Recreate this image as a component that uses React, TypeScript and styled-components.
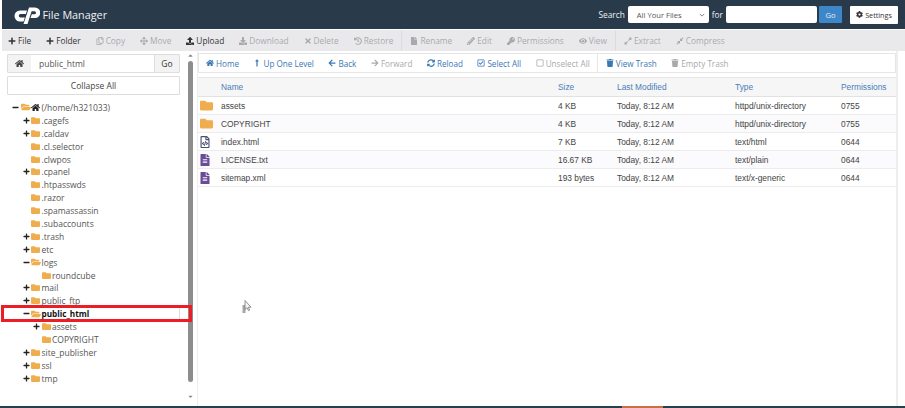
import React from 'react';
import styled, { createGlobalStyle } from 'styled-components';
import {
  FaHome, FaPlus, FaRegCopy, FaArrowsAlt, FaUpload, FaDownload, FaTimes, FaHistory, FaFile,
  FaPencilAlt, FaKey, FaEye, FaExpandAlt, FaCompressAlt, FaLongArrowAltUp, FaArrowLeft, FaArrowRight,
  FaSyncAlt, FaRegCheckSquare, FaRegSquare, FaTrash, FaFolder, FaFolderOpen, FaCog, FaMinus,
  FaRegFileCode, FaFileAlt, FaCaretUp, FaCaretDown,
} from 'react-icons/fa';

const actions = [
  { icon: <FaPlus />, label: 'File', on: true },
  { icon: <FaPlus />, label: 'Folder', on: true },
  { icon: <FaRegCopy />, label: 'Copy' },
  { icon: <FaArrowsAlt />, label: 'Move' },
  { icon: <FaUpload />, label: 'Upload', on: true },
  { icon: <FaDownload />, label: 'Download' },
  { icon: <FaTimes />, label: 'Delete' },
  { icon: <FaHistory />, label: 'Restore', split: true },
  { icon: <FaFile />, label: 'Rename' },
  { icon: <FaPencilAlt />, label: 'Edit' },
  { icon: <FaKey />, label: 'Permissions' },
  { icon: <FaEye />, label: 'View', split: true },
  { icon: <FaExpandAlt />, label: 'Extract' },
  { icon: <FaCompressAlt />, label: 'Compress' },
];

const navItems = [
  { icon: <FaHome />, label: 'Home', on: true },
  { icon: <FaLongArrowAltUp />, label: 'Up One Level', on: true },
  { icon: <FaArrowLeft />, label: 'Back', on: true },
  { icon: <FaArrowRight />, label: 'Forward' },
  { icon: <FaSyncAlt />, label: 'Reload', on: true },
  { icon: <FaRegCheckSquare />, label: 'Select All', on: true },
  { icon: <FaRegSquare />, label: 'Unselect All', split: true },
  { icon: <FaTrash />, label: 'View Trash', on: true },
  { icon: <FaTrash />, label: 'Empty Trash' },
];

const tree = [
  { label: '.cagefs', depth: 1, toggle: '+' },
  { label: '.caldav', depth: 1, toggle: '+' },
  { label: '.cl.selector', depth: 1 },
  { label: '.clwpos', depth: 1 },
  { label: '.cpanel', depth: 1, toggle: '+' },
  { label: '.htpasswds', depth: 1 },
  { label: '.razor', depth: 1 },
  { label: '.spamassassin', depth: 1 },
  { label: '.subaccounts', depth: 1 },
  { label: '.trash', depth: 1, toggle: '+' },
  { label: 'etc', depth: 1, toggle: '+' },
  { label: 'logs', depth: 1, toggle: '-' },
  { label: 'roundcube', depth: 2 },
  { label: 'mail', depth: 1, toggle: '+' },
  { label: 'public_ftp', depth: 1, toggle: '+' },
  { label: 'public_html', depth: 1, toggle: '-', current: true },
  { label: 'assets', depth: 2, toggle: '+' },
  { label: 'COPYRIGHT', depth: 2 },
  { label: 'site_publisher', depth: 1, toggle: '+' },
  { label: 'ssl', depth: 1, toggle: '+' },
  { label: 'tmp', depth: 1, toggle: '+' },
];

const files = [
  { kind: 'folder', name: 'assets', size: '4 KB', type: 'httpd/unix-directory', perm: '0755' },
  { kind: 'folder', name: 'COPYRIGHT', size: '4 KB', type: 'httpd/unix-directory', perm: '0755' },
  { kind: 'code', name: 'index.html', size: '7 KB', type: 'text/html', perm: '0644' },
  { kind: 'text', name: 'LICENSE.txt', size: '16.67 KB', type: 'text/plain', perm: '0644' },
  { kind: 'text', name: 'sitemap.xml', size: '193 bytes', type: 'text/x-generic', perm: '0644' },
];

const App: React.FC = () => {
  return (
    <Page>
      <GlobalStyle />
      <Header>
        <Logo viewBox="0 0 27 17" aria-hidden="true">
          <path d="M14 3.500H7a5.500 5.500 0 0 0 0 11h3.500l1.400-4H7.500a1.700 1.700 0 0 1 0-3.400h5.300z" fill="#fff" />
          <path d="M10.500 17L16 .5h6a5.200 5.200 0 0 1 0 10.500h-4.500l1.300-3.800h2.700a1.500 1.500 0 0 0 0-3h-2.900L14.500 17z" fill="#fff" />
        </Logo>
        <Title>File Manager</Title>
        <SearchGroup>
          <HeaderLabel>Search</HeaderLabel>
          <ScopeSelect>
            All Your Files
            <Chevron viewBox="0 0 8 5"><path d="M1 1l3 3 3-3" /></Chevron>
          </ScopeSelect>
          <HeaderLabel>for</HeaderLabel>
          <SearchInput />
          <GoButton>Go</GoButton>
        </SearchGroup>
        <SettingsButton><FaCog /> Settings</SettingsButton>
      </Header>

      <ActionBar>
        {actions.map((a) => (
          <React.Fragment key={a.label}>
            <ActionItem $on={a.on}>{a.icon}{a.label}</ActionItem>
            {a.split && <ActionDivider />}
          </React.Fragment>
        ))}
      </ActionBar>

      <Body>
        <Sidebar>
          <SideInner>
            <PathForm>
              <PathHome><FaHome /></PathHome>
              <PathValue>public_html</PathValue>
              <PathGo>Go</PathGo>
            </PathForm>
            <CollapseButton>Collapse All</CollapseButton>
            <Tree>
              <TreeRow $depth={0}>
                <Toggle><FaMinus /></Toggle>
                <FolderOpen />
                <HomeGlyph />
                <span>(/home/h321033)</span>
              </TreeRow>
              {tree.map((t) => (
                <TreeRow key={t.label} $depth={t.depth} $current={t.current}>
                  <Toggle>{t.toggle === '+' && <FaPlus />}{t.toggle === '-' && <FaMinus />}</Toggle>
                  {t.toggle === '-' ? <FolderOpen /> : <FolderClosed />}
                  <span>{t.label}</span>
                </TreeRow>
              ))}
            </Tree>
          </SideInner>
          <ScrollBar>
            <FaCaretUp />
            <ScrollThumb />
            <FaCaretDown />
          </ScrollBar>
        </Sidebar>

        <Main>
          <NavBar>
            {navItems.map((n) => (
              <React.Fragment key={n.label}>
                <NavItem $on={n.on}>{n.icon}{n.label}</NavItem>
                {n.split && <NavDivider />}
              </React.Fragment>
            ))}
          </NavBar>
          <Table>
            <HeadRow>
              <span />
              <span>Name</span>
              <span>Size</span>
              <span>Last Modified</span>
              <span>Type</span>
              <span>Permissions</span>
            </HeadRow>
            {files.map((f, i) => (
              <FileRow key={f.name} $odd={i % 2 === 1}>
                <FileIcon $kind={f.kind}>
                  {f.kind === 'folder' && <FaFolder />}
                  {f.kind === 'code' && <FaRegFileCode />}
                  {f.kind === 'text' && <FaFileAlt />}
                </FileIcon>
                <span>{f.name}</span>
                <span>{f.size}</span>
                <span>Today, 8:12 AM</span>
                <span>{f.type}</span>
                <span>{f.perm}</span>
              </FileRow>
            ))}
          </Table>
        </Main>
      </Body>

      <BottomStrip><StripAccent /></BottomStrip>
      <RedMark><RedMarkTick /></RedMark>
      <Cursor viewBox="0 0 10 14" aria-hidden="true">
        <rect x="0.500" y="5" width="3" height="8" fill="#a4a8ad" />
        <path d="M3 .5v9l2-1.800 1.500 3 1.200-.6L6.300 7.200H9z" fill="#f4f4f4" stroke="#777" strokeWidth="0.800" />
      </Cursor>
    </Page>
  );
};

export default App;

const GlobalStyle = createGlobalStyle`
  html, body {
    margin: 0;
    padding: 0;
    background: #fff;
    overflow: hidden;
  }
  * {
    box-sizing: border-box;
  }
`;

const Page = styled.div`
  position: relative;
  width: 905px;
  height: 408px;
  padding-left: 2px;
  display: flex;
  flex-direction: column;
  overflow: hidden;
  font-family: "Open Sans", sans-serif;
  font-size: 8.5px;
  color: #333;
  background: #fff;
`;

const Header = styled.div`
  height: 29px;
  flex: none;
  display: flex;
  align-items: center;
  padding: 0 7px 0 10.500px;
  background: #293a4a;
  color: #fff;
`;

const Logo = styled.svg`
  width: 27px;
  height: 17px;
  margin-top: 1px;
`;

const Title = styled.div`
  margin-left: 3px;
  font-size: 10.800px;
  color: #f0f2f4;
`;

const SearchGroup = styled.div`
  margin-left: auto;
  display: flex;
  align-items: center;
  gap: 2px;
`;

const HeaderLabel = styled.span`
  margin: 0 1px;
  font-size: 8.300px;
  color: #f0f2f4;
`;

const ScopeSelect = styled.div`
  width: 81px;
  height: 17px;
  padding: 0 4px 0 9px;
  display: flex;
  align-items: center;
  justify-content: space-between;
  background: #fff;
  border-radius: 2px;
  color: #555;
  font-size: 7.600px;
`;

const Chevron = styled.svg`
  width: 6px;
  height: 4px;
  fill: none;
  stroke: #555;
  stroke-width: 1;
`;

const SearchInput = styled.div`
  width: 91px;
  height: 17px;
  background: #fff;
  border-radius: 2px;
`;

const GoButton = styled.div`
  width: 23px;
  height: 17px;
  display: flex;
  align-items: center;
  justify-content: center;
  background: #3d87c9;
  border-radius: 1px;
  color: #e4eef7;
  font-size: 7.600px;
`;

const SettingsButton = styled.div`
  width: 48px;
  height: 18px;
  margin-left: 8px;
  display: flex;
  align-items: center;
  justify-content: center;
  gap: 2px;
  background: #fff;
  border-radius: 1px;
  color: #333;
  font-size: 7.200px;

  svg {
    width: 7px;
    height: 7px;
  }
`;

const ActionBar = styled.div`
  height: 21px;
  flex: none;
  display: flex;
  align-items: center;
  gap: 15px;
  padding-left: 6px;
  margin-top: 1px;
  background: #e9e9eb;
  font-size: 8.300px;
`;

const ActionItem = styled.div<{ $on?: boolean }>`
  display: flex;
  align-items: center;
  gap: 2px;
  white-space: nowrap;
  color: ${({ $on }) => ($on ? '#333' : '#a9a9ad')};

  svg {
    width: 8px;
    height: 8px;
  }
`;

const ActionDivider = styled.div`
  width: 1px;
  height: 21px;
  margin: 0 -7px 0 -7px;
  background: #dcdcdf;
`;

const Body = styled.div`
  flex: 1;
  min-height: 0;
  display: flex;
`;

const Sidebar = styled.div`
  width: 195px;
  flex: none;
  display: flex;
`;

const SideInner = styled.div`
  width: 185px;
  flex: none;
  padding: 3px 7px 0 5px;
`;

const PathForm = styled.div`
  height: 19px;
  display: flex;
  border: 1px solid #ddd;
  border-radius: 1px;
  background: #fff;
`;

const PathHome = styled.div`
  width: 23px;
  display: flex;
  align-items: center;
  justify-content: center;
  background: #f3f3f3;
  color: #444;

  svg {
    width: 9px;
    height: 9px;
  }
`;

const PathValue = styled.div`
  flex: 1;
  display: flex;
  align-items: center;
  padding-left: 8px;
  color: #555;
`;

const PathGo = styled.div`
  width: 25px;
  display: flex;
  align-items: center;
  justify-content: center;
  background: #f3f3f3;
  border-left: 1px solid #ddd;
  color: #333;
`;

const CollapseButton = styled.div`
  height: 19px;
  margin-top: 3px;
  display: flex;
  align-items: center;
  justify-content: center;
  border: 1px solid #ddd;
  border-radius: 1px;
  color: #444;
`;

const Tree = styled.div`
  margin-top: 6px;
`;

const TreeRow = styled.div<{ $depth: number; $current?: boolean }>`
  height: 12.900px;
  display: flex;
  align-items: center;
  gap: 1.500px;
  margin-left: -5px;
  padding-left: ${({ $depth }) => 10 + $depth * 10.5}px;
  color: ${({ $current }) => ($current ? '#111' : '#555')};
  font-size: ${({ $current }) => ($current ? '8.200px' : '8.500px')};
  font-weight: ${({ $current }) => ($current ? 700 : 400)};
  white-space: nowrap;
`;

const Toggle = styled.span`
  width: 7px;
  height: 7px;
  flex: none;
  display: flex;
  color: #222;

  svg {
    width: 7px;
    height: 7px;
  }
`;

const FolderClosed = styled(FaFolder)`
  width: 9px;
  height: 9px;
  flex: none;
  color: #f0ad4e;
`;

const FolderOpen = styled(FaFolderOpen)`
  width: 10px;
  height: 10px;
  margin-right: -1px;
  flex: none;
  color: #f0ad4e;
`;

const HomeGlyph = styled(FaHome)`
  width: 9px;
  height: 9px;
  flex: none;
  color: #222;
`;

const ScrollBar = styled.div`
  width: 6px;
  padding: 1px 0 6px;
  display: flex;
  flex-direction: column;
  align-items: center;
  color: #888;

  svg {
    width: 7px;
    height: 7px;
    flex: none;
  }
`;

const ScrollThumb = styled.div`
  width: 5px;
  flex: 1;
  margin: 2px 0 11px;
  border-radius: 3px;
  background: #8d8d8f;
`;

const Main = styled.div`
  width: 701px;
  flex: none;
  padding-top: 2px;
  border-left: 1px solid #eee;
  border-right: 2px solid #eee;
`;

const NavBar = styled.div`
  height: 20px;
  display: flex;
  align-items: center;
  gap: 14.500px;
  padding-left: 7px;
  border: 1px solid #e6e6e6;
  font-size: 8.150px;
`;

const NavItem = styled.div<{ $on?: boolean }>`
  display: flex;
  align-items: center;
  gap: 2px;
  white-space: nowrap;
  color: ${({ $on }) => ($on ? '#3a78b5' : '#a9a9ad')};

  svg {
    width: 8px;
    height: 8px;
  }
`;

const NavDivider = styled.div`
  width: 1px;
  height: 20px;
  margin: 0 -7px;
  background: #e6e6e6;
`;

const Table = styled.div`
  margin-top: 4px;
  font-family: "Liberation Sans", sans-serif;
  font-size: 8.350px;
`;

const HeadRow = styled.div`
  height: 20px;
  display: grid;
  grid-template-columns: 23px 337px 59px 118px 106px 1fr;
  align-items: center;
  background: #f6f6f6;
  border-top: 1px solid #e6e6e6;
  border-bottom: 1px solid #e2e2e2;
  color: #4a80b8;
`;

const FileRow = styled.div<{ $odd: boolean }>`
  height: 18px;
  display: grid;
  grid-template-columns: 23px 337px 59px 118px 106px 1fr;
  align-items: center;
  background: ${({ $odd }) => ($odd ? '#fbfafc' : '#fff')};
  border-bottom: 1px solid #ececec;
  color: #444;
`;

const FileIcon = styled.span<{ $kind: string }>`
  display: flex;
  padding-left: 2px;
  color: ${({ $kind }) => ($kind === 'folder' ? '#f0ad4e' : $kind === 'code' ? '#4a4f78' : '#6b4a96')};

  svg {
    width: ${({ $kind }) => ($kind === 'folder' ? '13px' : '10px')};
    height: ${({ $kind }) => ($kind === 'folder' ? '13px' : '12px')};
  }
`;

const BottomStrip = styled.div`
  height: 2px;
  flex: none;
  margin-left: -2px;
  background: #26414c;
`;

const StripAccent = styled.div`
  width: 41px;
  height: 2px;
  margin-left: 622px;
  background: #c9704a;
`;

const RedMark = styled.div`
  position: absolute;
  left: 1px;
  top: 305px;
  width: 191px;
  height: 17px;
  border: 3.500px solid #ee1c25;
`;

const RedMarkTick = styled.div`
  width: 1px;
  height: 100%;
  margin-left: 175px;
  background: #ddd;
`;

const Cursor = styled.svg`
  position: absolute;
  left: 242px;
  top: 300px;
  width: 10px;
  height: 14px;
`;
